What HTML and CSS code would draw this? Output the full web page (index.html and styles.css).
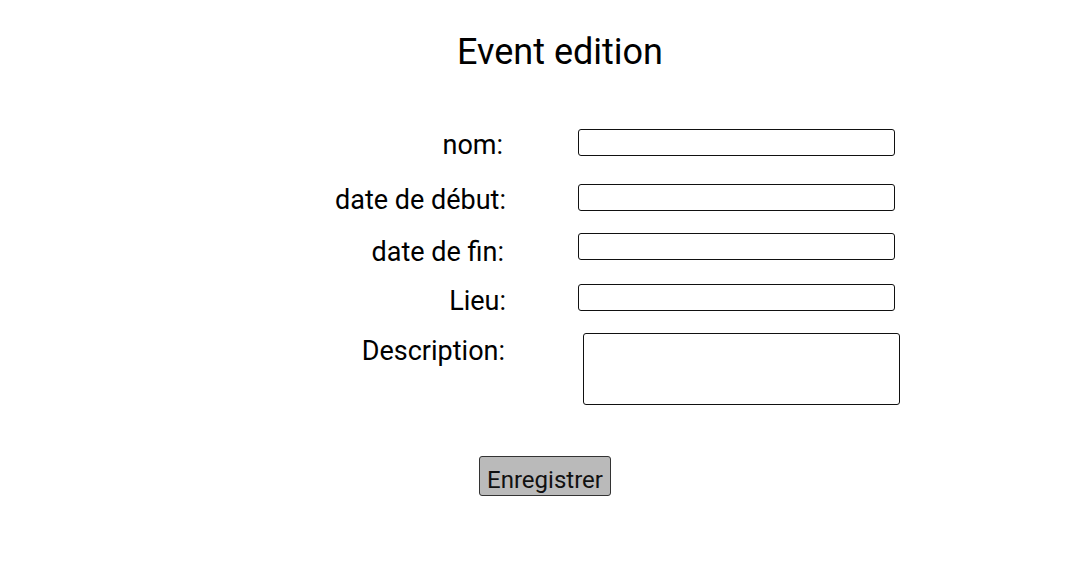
FILE: index.html
```html
<!DOCTYPE html>
<html lang="fr">
<head>
<meta charset="utf-8">
<title>Event edition</title>
<link rel="stylesheet" href="styles.css">
</head>
<body>
<main class="page">
  <h1 class="title">Event edition</h1>
  <form class="form">
    <div class="row row-1">
      <label class="label" for="nom">nom:</label>
      <input class="input" id="nom" type="text">
    </div>
    <div class="row row-2">
      <label class="label" for="debut">date de début:</label>
      <input class="input" id="debut" type="text">
    </div>
    <div class="row row-3">
      <label class="label" for="fin">date de fin:</label>
      <input class="input" id="fin" type="text">
    </div>
    <div class="row row-4">
      <label class="label" for="lieu">Lieu:</label>
      <input class="input" id="lieu" type="text">
    </div>
    <div class="row row-5">
      <label class="label" for="desc">Description:</label>
      <textarea class="textarea" id="desc"></textarea>
    </div>
    <div class="actions">
      <button class="button" type="button">Enregistrer</button>
    </div>
  </form>
</main>
</body>
</html>
```

FILE: styles.css
```css
html, body {
  margin: 0;
  padding: 0;
  background: #ffffff;
}

body {
  font-family: Roboto, "Liberation Sans", sans-serif;
  color: #000000;
}

.page {
  display: flex;
  flex-direction: column;
}

.title {
  margin: 0;
  padding: 31px 0 0 30px;
  font-size: 36px;
  font-weight: 400;
  line-height: 42px;
  text-align: center;
}

.form {
  display: flex;
  flex-direction: column;
  margin-top: 56px;
}

.row {
  display: grid;
  grid-template-columns: 506px 328px;
  column-gap: 72px;
  align-items: start;
  height: 32px;
}

.row-1 { margin-bottom: 23px; }
.row-2 { margin-bottom: 17px; }
.row-3 { margin-bottom: 19px; }
.row-4 { margin-bottom: 17px; }
.row-5 { height: 72px; }

.label {
  font-size: 27px;
  line-height: 32px;
  margin-top: 1px;
  text-align: right;
}

.row-1 .label { margin-top: 0; padding-right: 3px; }
.row-2 .label { margin-top: 0; }
.row-3 .label { margin-top: 3px; padding-right: 2px; }
.row-5 .label { margin-top: 2px; padding-right: 1px; }

.input {
  box-sizing: border-box;
  width: 317px;
  height: 27px;
  margin: 0;
  padding: 0 4px;
  border: 1px solid #111;
  border-radius: 3px;
  background: #fff;
  font-family: inherit;
  font-size: 14px;
}

.textarea {
  box-sizing: border-box;
  width: 317px;
  height: 72px;
  margin: 0 0 0 5px;
  padding: 2px 4px;
  border: 1px solid #111;
  border-radius: 3px;
  background: #fff;
  resize: none;
  font-family: inherit;
  font-size: 14px;
}

.actions {
  display: flex;
  justify-content: center;
  margin-top: 51px;
}

.button {
  box-sizing: border-box;
  width: 132px;
  height: 40px;
  margin: 0;
  padding: 8px 0 0;
  border: 1px solid #333;
  border-radius: 3px;
  background: #bababa;
  color: #111;
  font-family: inherit;
  font-size: 24px;
  line-height: 28px;
  text-align: center;
}
```
